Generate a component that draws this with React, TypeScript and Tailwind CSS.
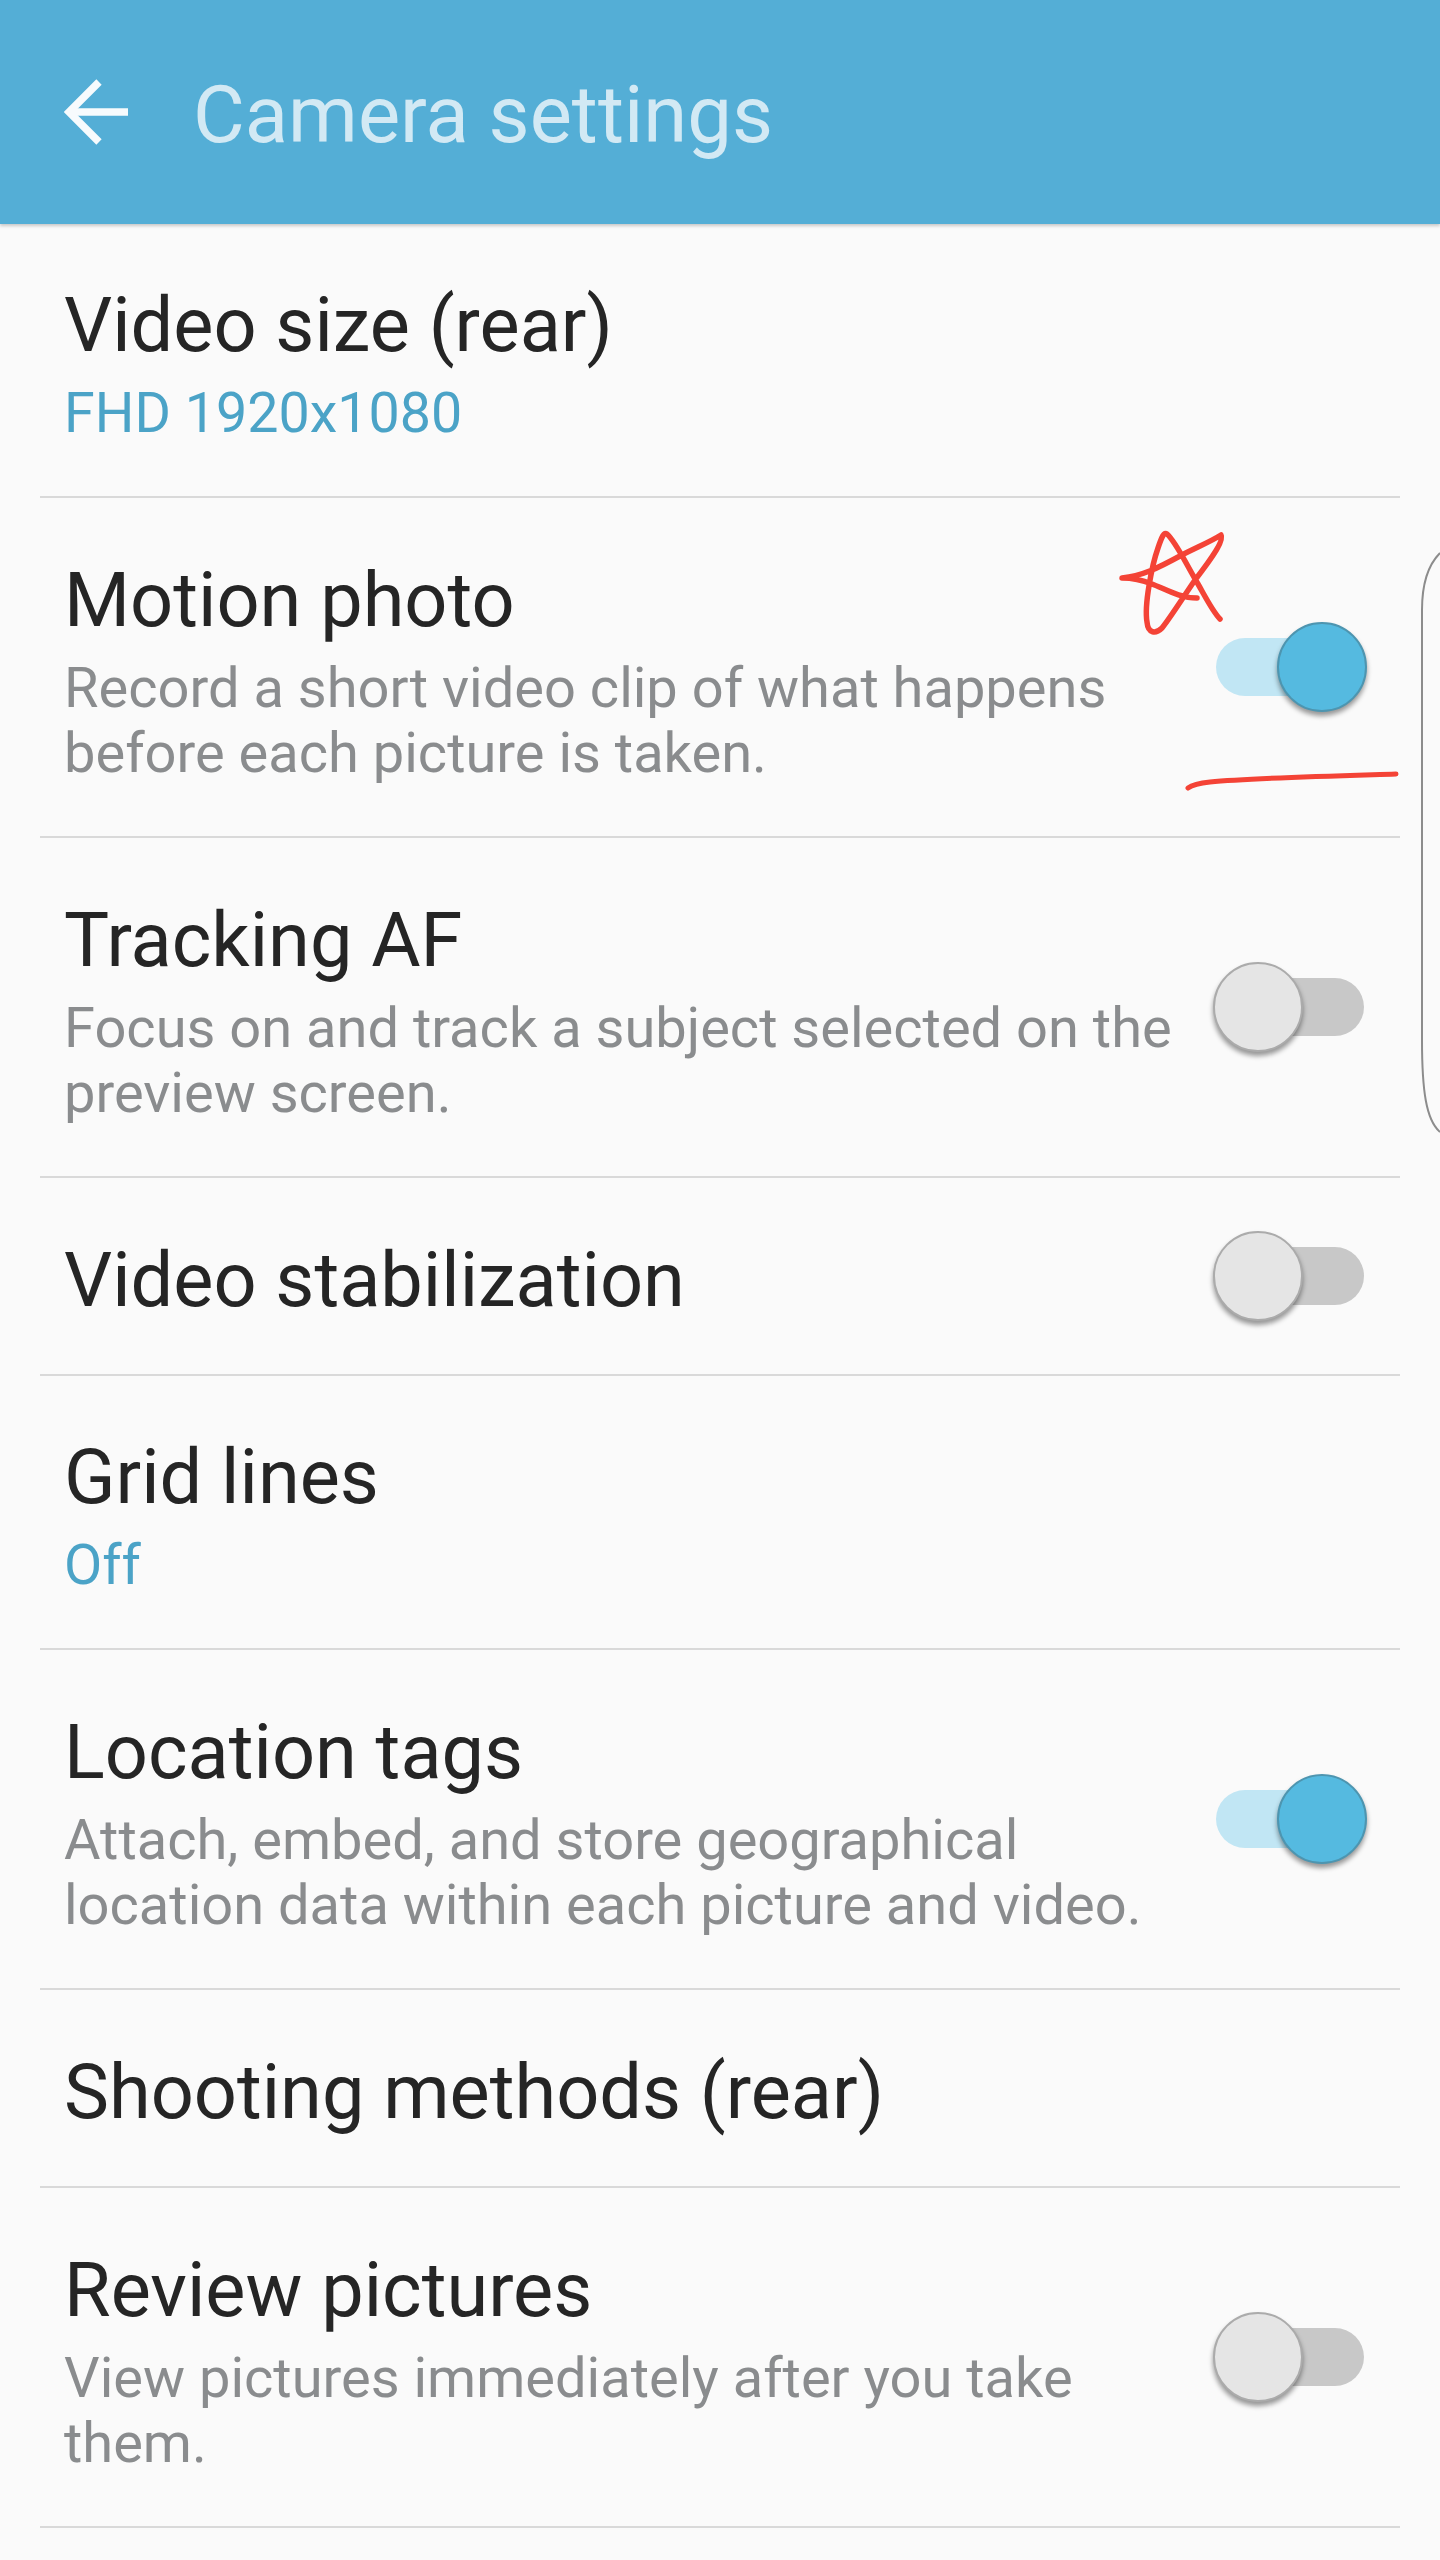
import React from "react";

type Row = {
  title: string;
  height: string;
  value?: string;
  desc?: string;
  toggle?: boolean;
};

const rows: Row[] = [
  { title: "Video size (rear)", value: "FHD 1920x1080", height: "h-[274px]" },
  {
    title: "Motion photo",
    desc: "Record a short video clip of what happens before each picture is taken.",
    toggle: true,
    height: "h-[340px]",
  },
  {
    title: "Tracking AF",
    desc: "Focus on and track a subject selected on the preview screen.",
    toggle: false,
    height: "h-[340px]",
  },
  { title: "Video stabilization", toggle: false, height: "h-[198px]" },
  { title: "Grid lines", value: "Off", height: "h-[274px]" },
  {
    title: "Location tags",
    desc: "Attach, embed, and store geographical location data within each picture and video.",
    toggle: true,
    height: "h-[340px]",
  },
  { title: "Shooting methods (rear)", height: "h-[198px]" },
  {
    title: "Review pictures",
    desc: "View pictures immediately after you take them.",
    toggle: false,
    height: "h-[340px]",
  },
];

function Toggle({ on }: { on: boolean }) {
  return (
    <div
      className={`flex h-[58px] w-[148px] shrink-0 items-center rounded-full ${
        on ? "justify-end bg-[#c1e6f4]" : "justify-start bg-[#c8c8c8]"
      }`}
    >
      {on ? (
        <div className="-mr-[3px] size-[90px] shrink-0 rounded-full border-2 border-[#4d95b0] bg-[#55bae0] shadow-[0_4px_5px_rgba(0,0,0,0.4)]" />
      ) : (
        <div className="-ml-[3px] size-[90px] shrink-0 rounded-full border-2 border-[#ababab] bg-[#e5e5e5] shadow-[0_4px_5px_rgba(0,0,0,0.4)]" />
      )}
    </div>
  );
}

function SettingRow({ row }: { row: Row }) {
  return (
    <div className={`mx-10 flex items-center justify-between border-b-2 border-[#d9d9d9] pl-[24px] pr-[36px] ${row.height}`}>
      <div className="max-w-[1125px] pt-[7px]">
        <div className="text-[75.7px] leading-[88px] text-[#252525]">{row.title}</div>
        {row.value && <div className="mt-[12px] text-[55.6px] leading-[65px] text-[#4ba3c7]">{row.value}</div>}
        {row.desc && <div className="mt-[12px] text-[56px] leading-[65px] text-[#8a8c8e]">{row.desc}</div>}
      </div>
      {row.toggle !== undefined && <Toggle on={row.toggle} />}
    </div>
  );
}

export default function App() {
  return (
    <div className="relative h-[2560px] w-[1440px] overflow-hidden bg-[#fafafa] font-['Roboto',sans-serif]">
      <header className="relative flex h-[224px] items-center bg-[#54aed6] pl-16 shadow-[0_2px_3px_rgba(0,0,0,0.2)]">
        <svg width="66" height="66" viewBox="0 0 66 66" fill="none" stroke="#f7fbfd" strokeWidth="7.5" className="shrink-0">
          <path d="M64 33H5" />
          <path d="M35 3L5 33L35 63" />
        </svg>
        <span className="ml-[63px] pt-[6px] text-[79.6px] leading-none text-[#d2e9f4]">Camera settings</span>
      </header>

      {rows.map((row) => (
        <SettingRow key={row.title} row={row} />
      ))}

      {/* pen annotations + edge panel handle, drawn over the screen */}
      <svg width="360" height="700" viewBox="0 0 360 700" fill="none" className="absolute left-[1080px] top-[480px]">
        <path
          d="M117 118C100 118 85 109 72 104C62 100 52 98 42 98C62 96 78 88 100 76C115 68 130 62 141 55C144 60 135 74 115 100C100 122 90 138 82 148C76 154 68 154 67 142C64 125 72 85 78 68C82 56 84 52 87 54C96 62 105 82 118 104C126 118 133 132 140 139"
          stroke="#f44336"
          strokeWidth="5.5"
          strokeLinecap="round"
          strokeLinejoin="round"
        />
        <path d="M108 308C112 305 120 303 130 302C170 298 250 296 316 294" stroke="#f44336" strokeWidth="5" strokeLinecap="round" />
        <path d="M360 73C348 85 342 105 342 130V560C342 610 346 640 360 652" stroke="#8c8c8c" strokeWidth="2" />
      </svg>
    </div>
  );
}
